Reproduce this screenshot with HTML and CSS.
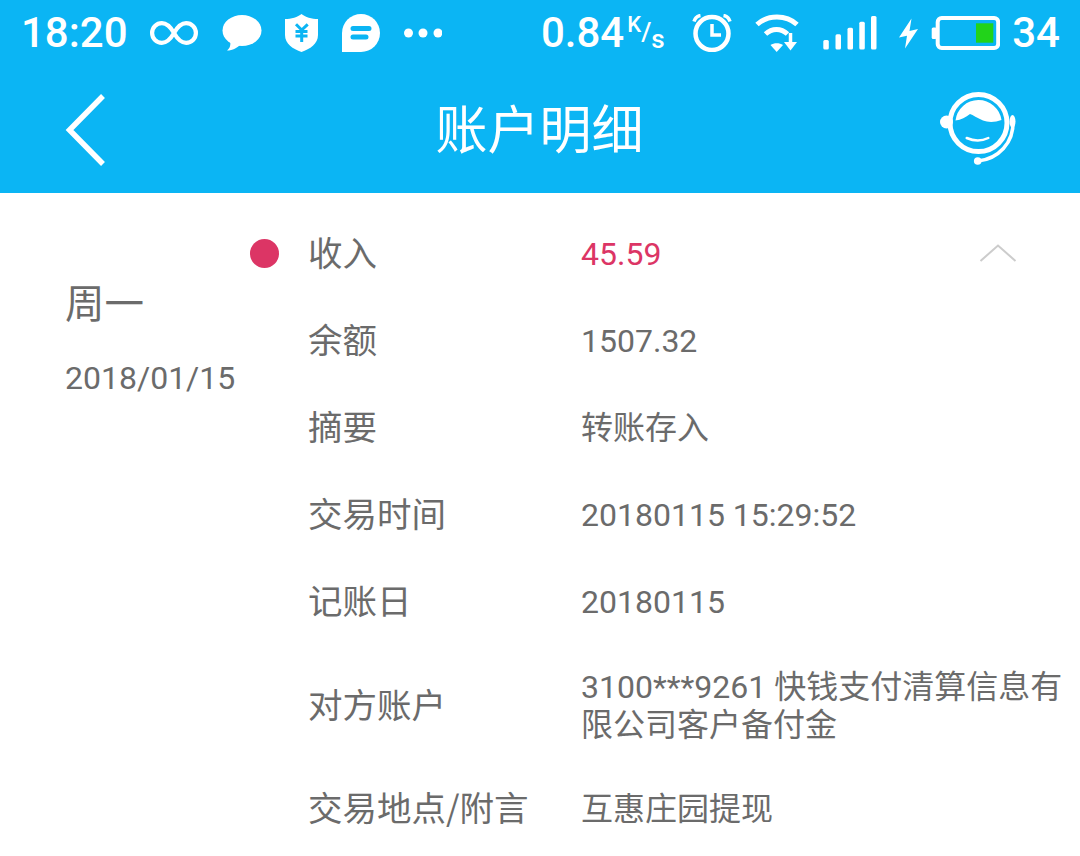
FILE: index.html
```html
<!DOCTYPE html>
<html lang="zh-CN">
<head>
<meta charset="utf-8">
<title>账户明细</title>
<link rel="stylesheet" href="styles.css">
</head>
<body>
<header class="app-header">
  <div class="status-bar">
    <span class="status-text time">18:20</span>
    <svg class="ic ml-22" width="48" height="24" viewBox="0 0 48 24"><path class="line" stroke-width="4.200" d="M24 12C20 5 16 2.200 11.900 2.200A9.800 9.800 0 0 0 11.900 21.800C16 21.800 20 19 24 12C28 5 32 2.200 36.100 2.200A9.800 9.800 0 0 1 36.100 21.800C32 21.800 28 19 24 12Z"/></svg>
    <svg class="ic ml-24" width="40" height="36" viewBox="0 0 40 36"><ellipse class="solid" cx="20" cy="15.500" rx="19.500" ry="15.500"/><path class="solid" d="M8 25C9 30 8 33 5 35.500C11 35.500 15 33 19 29Z"/></svg>
    <svg class="ic ml-23" width="33" height="38" viewBox="0 0 33 38"><path class="solid" d="M16.500 0C20 3 27 5 33 5V21C33 30 25 35 16.500 38C8 35 0 30 0 21V5C6 5 13 3 16.500 0Z"/><path class="cut" stroke-width="3" d="M11 10.300L16.700 16L22.700 10.300M10.500 17.500H22.500M10.500 22H22.500M16.700 16V28"/></svg>
    <svg class="ic ml-24" width="38" height="38" viewBox="0 0 38 38"><path class="solid" d="M0 38V19A19 19 0 1 1 19 38Z"/><path class="cut round" stroke-width="5" d="M11 14.500H27M11 23H24"/></svg>
    <svg class="ic ml-24" width="38" height="10" viewBox="0 0 38 10"><circle class="solid" cx="4.500" cy="5" r="4.500"/><circle class="solid" cx="19" cy="5" r="4.500"/><circle class="solid" cx="34" cy="5" r="4.500"/></svg>
    <div class="status-right">
      <span class="status-text">0.84</span>
      <span class="speed-unit"><span class="unit-k">K</span><span class="unit-slash">/</span><span class="unit-s">s</span></span>
      <svg class="ic clock" width="41" height="38" viewBox="0 0 41 38"><circle class="line" stroke-width="4.500" cx="20" cy="19.500" r="16.500"/><path class="line" stroke-width="3.500" d="M20 10V21H29"/><path class="line" stroke-width="3.500" d="M2 7.500C3 4 5 2 8.500 1.500M38 7.500C37 4 35 2 31.500 1.500"/></svg>
      <svg class="ic ml-22" width="45" height="38" viewBox="0 0 45 38"><path class="line" stroke-width="5" d="M2 10.500C13 0.500 31 0.500 42 10.500"/><path class="line" stroke-width="5" d="M10.500 20C17 14 26 14 32.500 20"/><path class="solid" d="M15.500 31C19 28.500 24.500 28.500 28 31L21.700 38Z"/><path class="line" stroke-width="3.500" d="M35.500 19V30"/><path class="solid" d="M29 28H42L35.500 36.500Z"/></svg>
      <svg class="ic ml-23" width="54" height="38" viewBox="0 0 54 38"><rect class="solid" x="0.300" y="26" width="5.500" height="9.500" rx="1.500"/><rect class="solid" x="12.500" y="20.300" width="5.500" height="15.200" rx="1.500"/><rect class="solid" x="24.500" y="13.700" width="5.500" height="21.800" rx="1.500"/><rect class="solid" x="36.300" y="7.700" width="5.500" height="27.800" rx="1.500"/><rect class="solid" x="48" y="2" width="5.500" height="33.500" rx="1.500"/></svg>
      <svg class="ic ml-22" width="20" height="38" viewBox="0 0 20 38"><path class="solid" d="M12.500 4.500L0 23.500L8 21.800L6 34.500L19 15L10.500 17Z"/></svg>
      <svg class="ic ml-12" width="69" height="38" viewBox="0 0 69 38"><rect class="solid" x="0.700" y="13.500" width="5" height="11.500" rx="1.500"/><rect class="line" stroke-width="4" x="6.700" y="4" width="60.500" height="30" rx="4"/><rect class="level" x="45" y="9.300" width="17.300" height="19.400"/></svg>
      <span class="status-text ml-12">34</span>
    </div>
  </div>
  <nav class="nav-bar">
    <svg class="back" width="50" height="80" viewBox="0 0 50 80"><path class="line miter" stroke-width="5.500" d="M42 6L8.500 40L42 74"/></svg>
    <h1 class="title">账户明细</h1>
    <svg class="agent" width="80" height="80" viewBox="0 0 80 80">
      <circle class="line" stroke-width="5" cx="40.500" cy="35" r="28.500"/>
      <path class="solid" d="M17.500 32.500A23.200 23.200 0 0 1 63.500 32C57 34.500 50 34.500 45 32.500C39 30 35 27 32 26C28 29 23 32 17.500 32.500Z"/>
      <circle class="solid" cx="8.500" cy="34" r="6.500"/>
      <ellipse class="solid" cx="74.500" cy="33.500" rx="3" ry="6.500"/>
      <path class="line" stroke-width="3.500" d="M75 33C76 55 60 71 40 73"/>
      <circle class="solid" cx="39.700" cy="73" r="3.800"/>
      <path class="line round" stroke-width="2.500" d="M28.700 50Q40 55 50.300 50"/>
    </svg>
  </nav>
</header>
<main class="detail">
  <aside class="day">
    <div class="weekday">周一</div>
    <div class="date">2018/01/15</div>
  </aside>
  <div class="rows">
    <div class="row">
      <span class="dot"></span>
      <span class="label">收入</span>
      <span class="value income">45.59</span>
      <svg class="collapse" width="38" height="20" viewBox="0 0 38 20"><path class="chev" d="M1.500 18L19 2.500L36.500 18"/></svg>
    </div>
    <div class="row"><span class="slot"></span><span class="label">余额</span><span class="value">1507.32</span></div>
    <div class="row"><span class="slot"></span><span class="label">摘要</span><span class="value">转账存入</span></div>
    <div class="row"><span class="slot"></span><span class="label">交易时间</span><span class="value">20180115 15:29:52</span></div>
    <div class="row"><span class="slot"></span><span class="label">记账日</span><span class="value">20180115</span></div>
    <div class="row row-long"><span class="slot"></span><span class="label">对方账户</span><span class="value">3100***9261 快钱支付清算信息有限公司客户备付金</span></div>
    <div class="row"><span class="slot"></span><span class="label">交易地点/附言</span><span class="value">互惠庄园提现</span></div>
  </div>
</main>
</body>
</html>
```
FILE: styles.css
```css
* { box-sizing: border-box; }
html, body { margin: 0; padding: 0; }
body {
  width: 1080px;
  height: 856px;
  overflow: hidden;
  background: #fff;
  color: #6b6b6b;
  font-family: Roboto, "Noto Sans CJK SC", sans-serif;
}
.app-header { background: #0bb5f4; height: 193px; color: #fff; }
.status-bar {
  display: flex;
  align-items: center;
  height: 66px;
  padding: 0 20px 0 21px;
}
.status-text { font-size: 42px; line-height: 1; font-weight: 500; }
.status-right { display: flex; align-items: center; margin-left: auto; }
.ic { display: block; flex: none; }
.ml-12 { margin-left: 12px; }
.ml-22 { margin-left: 22px; }
.ml-23 { margin-left: 23px; }
.ml-24 { margin-left: 24px; }
.clock { margin-left: 30px; }
.solid { fill: #fff; }
.line { fill: none; stroke: #fff; }
.round { stroke-linecap: round; }
.miter { stroke-linejoin: miter; }
.cut { fill: none; stroke: #0bb5f4; }
.level { fill: #22d31a; }
.speed-unit {
  display: inline-block;
  margin-left: 3px;
  width: 35px;
  white-space: nowrap;
  line-height: 1;
  font-size: 24px;
  font-weight: 500;
}
.unit-k { font-size: 22px; vertical-align: 10px; }
.unit-slash { font-size: 26px; vertical-align: 1px; }
.unit-s { font-size: 26px; vertical-align: -6px; }
.nav-bar {
  display: grid;
  grid-template-columns: 1fr auto 1fr;
  align-items: center;
  height: 127px;
  padding: 0 62px 0 61px;
}
.back { display: block; }
.agent { display: block; justify-self: end; margin-top: -3px; }
.title {
  margin: -4px 0 0;
  font-size: 52px;
  font-weight: 400;
  line-height: 1.2;
  font-family: "Noto Sans CJK SC", sans-serif;
}
.detail { display: flex; padding-top: 17px; }
.day { width: 250px; padding: 68px 0 0 65px; flex: none; }
.weekday { font-size: 39.5px; line-height: 46px; font-family: "Noto Sans CJK SC", sans-serif; }
.date { font-size: 32px; line-height: 38px; margin-top: 35px; white-space: nowrap; }
.rows { flex: 1; min-width: 0; }
.row { display: flex; align-items: center; min-height: 87px; }
.row-long { padding: 23px 0 21px; }
.dot { width: 29px; height: 29px; border-radius: 50%; background: #dc3565; margin-right: 29px; flex: none; }
.slot { width: 58px; flex: none; }
.label {
  width: 273px;
  flex: none;
  margin-bottom: 6px;
  font-size: 34.5px;
  line-height: 38px;
  font-family: "Noto Sans CJK SC", sans-serif;
  white-space: nowrap;
}
.value {
  width: 482px;
  flex: none;
  font-size: 32px;
  line-height: 38px;
}
.income { color: #dc3565; width: 398px; }
.collapse { flex: none; display: block; margin-top: -2px; }
.chev { fill: none; stroke: #ccc; stroke-width: 2; }
```
